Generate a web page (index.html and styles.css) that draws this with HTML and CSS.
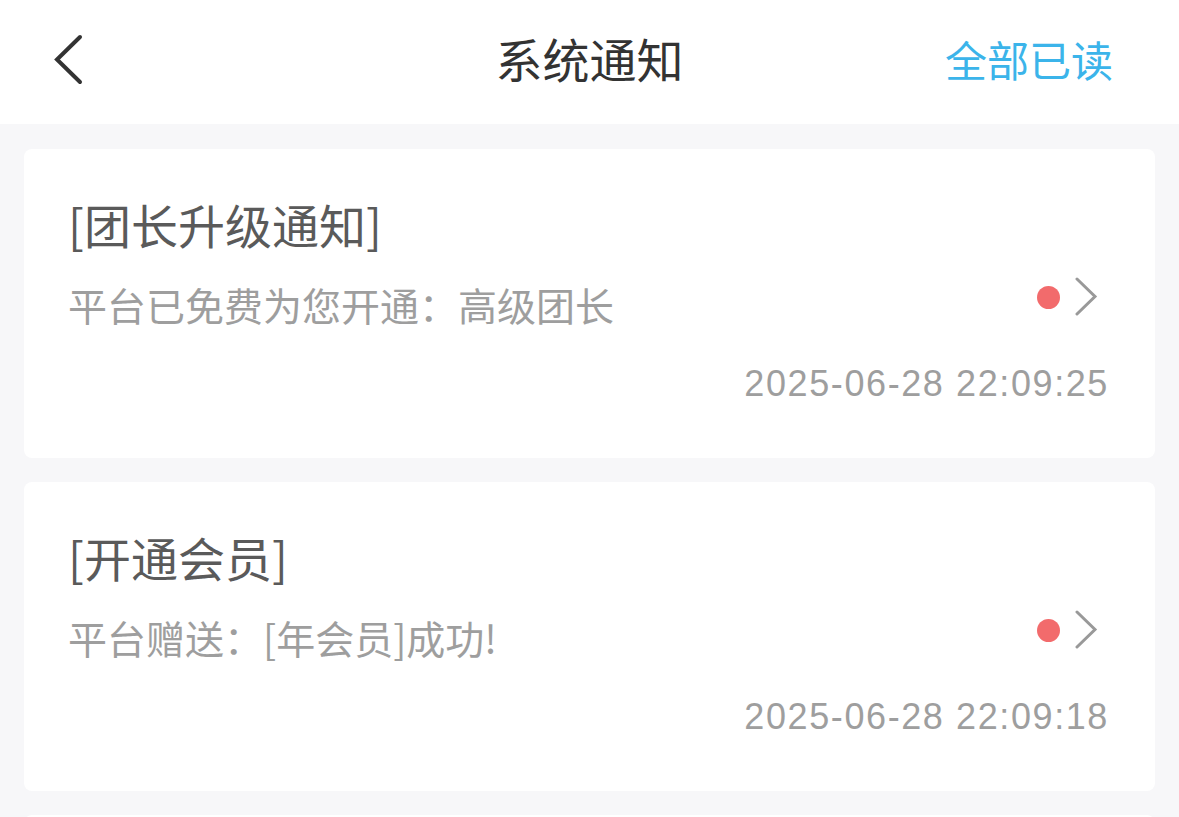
FILE: index.html
```html
<!DOCTYPE html>
<html lang="zh-CN">
<head>
<meta charset="utf-8">
<title>系统通知</title>
<link rel="stylesheet" href="styles.css">
</head>
<body>
<div class="page">
  <header class="navbar">
    <div class="nav-left">
      <svg class="back-icon" width="40" height="60" viewBox="0 0 40 60">
        <polyline points="26,8 3,30.5 26,53" fill="none" stroke="#333" stroke-width="4" stroke-linecap="round" stroke-linejoin="miter"/>
      </svg>
    </div>
    <div class="nav-title">系统通知</div>
    <div class="nav-right">全部已读</div>
  </header>
  <main class="list">
    <section class="card">
      <div class="card-title">[团长升级通知]</div>
      <div class="card-row">
        <div class="card-desc">平台已免费为您开通：高级团长</div>
        <div class="card-status">
          <span class="dot"></span>
          <svg class="chev" width="24" height="40" viewBox="0 0 24 40">
            <polyline points="3,2 21,19.5 3,37" fill="none" stroke="#999" stroke-width="3" stroke-linecap="round"/>
          </svg>
        </div>
      </div>
      <div class="card-time">2025-06-28 22:09:25</div>
    </section>
    <section class="card">
      <div class="card-title">[开通会员]</div>
      <div class="card-row">
        <div class="card-desc">平台赠送：[年会员]成功!</div>
        <div class="card-status">
          <span class="dot"></span>
          <svg class="chev" width="24" height="40" viewBox="0 0 24 40">
            <polyline points="3,2 21,19.5 3,37" fill="none" stroke="#999" stroke-width="3" stroke-linecap="round"/>
          </svg>
        </div>
      </div>
      <div class="card-time">2025-06-28 22:09:18</div>
    </section>
    <section class="card"></section>
  </main>
</div>
</body>
</html>
```
FILE: styles.css
```css
* { box-sizing: border-box; }
html, body {
  margin: 0;
  padding: 0;
  background: #f7f7f9;
  font-family: "Noto Sans CJK SC", "Noto Sans", sans-serif;
  overflow: hidden;
}
.page {
  width: 1179px;
  height: 817px;
  overflow: hidden;
}
.navbar {
  height: 124px;
  background: #ffffff;
  display: flex;
  align-items: center;
  padding: 0 66px 0 54px;
}
.nav-left {
  width: 212px;
  display: flex;
  align-items: center;
}
.back-icon {
  display: block;
  margin-top: -6px;
}
.nav-title {
  flex: 1;
  text-align: center;
  font-size: 47px;
  line-height: 64px;
  color: #333333;
  margin-top: -9px;
}
.nav-right {
  width: 200px;
  text-align: right;
  font-size: 42px;
  line-height: 60px;
  color: #3bb4ea;
  margin-top: -7px;
}
.list {
  padding: 25px 24px 0 24px;
  display: flex;
  flex-direction: column;
  gap: 24px;
}
.card {
  height: 309px;
  flex: none;
  background: #ffffff;
  border-radius: 8px;
  padding: 43px 47px 0 44px;
}
.card-title {
  font-size: 47px;
  line-height: 64px;
  color: #5a5a5a;
}
.card-row {
  margin-top: 20px;
  height: 56px;
  display: flex;
  align-items: center;
  justify-content: space-between;
}
.card-desc {
  font-size: 39px;
  line-height: 56px;
  color: #9e9e9e;
}
.card-status {
  display: flex;
  align-items: center;
  gap: 14px;
  margin-top: -14px;
  margin-right: 10px;
}
.dot {
  width: 23px;
  height: 23px;
  border-radius: 50%;
  background: #f26b6c;
}
.chev { display: block; }
.card-time {
  margin-top: 27px;
  text-align: right;
  font-family: "Liberation Sans", Arial, sans-serif;
  font-size: 36px;
  line-height: 50px;
  color: #9e9e9e;
  letter-spacing: 1.6px;
  margin-right: -1px;
}
```
